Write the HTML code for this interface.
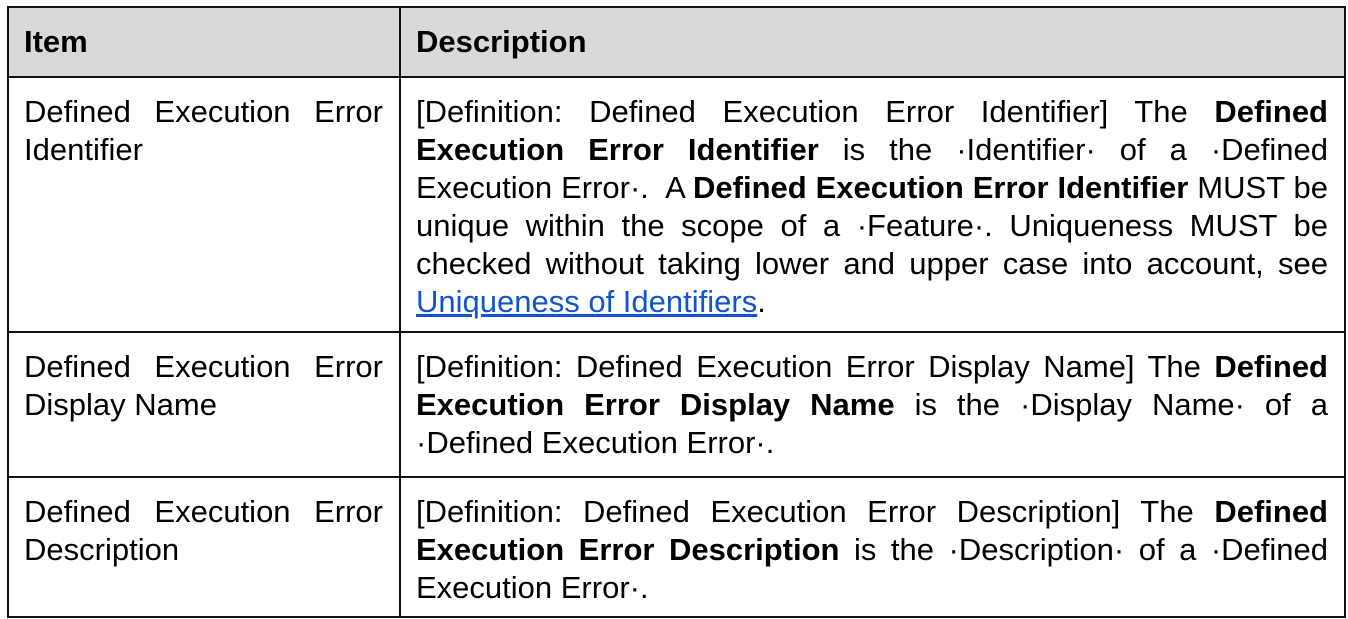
<!DOCTYPE html>
<html><head><meta charset="utf-8"><style>
body{margin:0;background:#fff;font-family:"Liberation Sans",Arimo,Arial,sans-serif;font-size:31px;color:#000}
table{position:absolute;left:7px;top:6px;border-collapse:collapse;width:1339px;table-layout:fixed}
td,th{border:2px solid #111;padding:15px 16px 8px 15px;vertical-align:top;line-height:38px;text-align:justify}
th{background:#d9d9d9;font-weight:bold;text-align:left;padding-top:15px;padding-bottom:15px}
a{color:#1155cc}
</style></head><body>
<table>
<colgroup><col style="width:392px"><col></colgroup>
<tr style="height:70px"><th>Item</th><th>Description</th></tr>
<tr style="height:255px"><td>Defined Execution Error Identifier</td><td>[Definition: Defined Execution Error Identifier] The <b>Defined Execution Error Identifier</b> is the ·Identifier· of a ·Defined Execution Error·.&nbsp; A <b>Defined Execution Error Identifier</b> MUST be unique within the scope of a ·Feature·. Uniqueness MUST be checked without taking lower and upper case into account, see <a href="#">Uniqueness of Identifiers</a>.</td></tr>
<tr style="height:145px"><td>Defined Execution Error Display Name</td><td>[Definition: Defined Execution Error Display Name] The <b>Defined Execution Error Display Name</b> is the ·Display Name· of a ·Defined Execution Error·.</td></tr>
<tr style="height:140px"><td>Defined Execution Error Description</td><td>[Definition: Defined Execution Error Description] The <b>Defined Execution Error Description</b> is the ·Description· of a ·Defined Execution Error·.</td></tr>
</table>
</body></html>
